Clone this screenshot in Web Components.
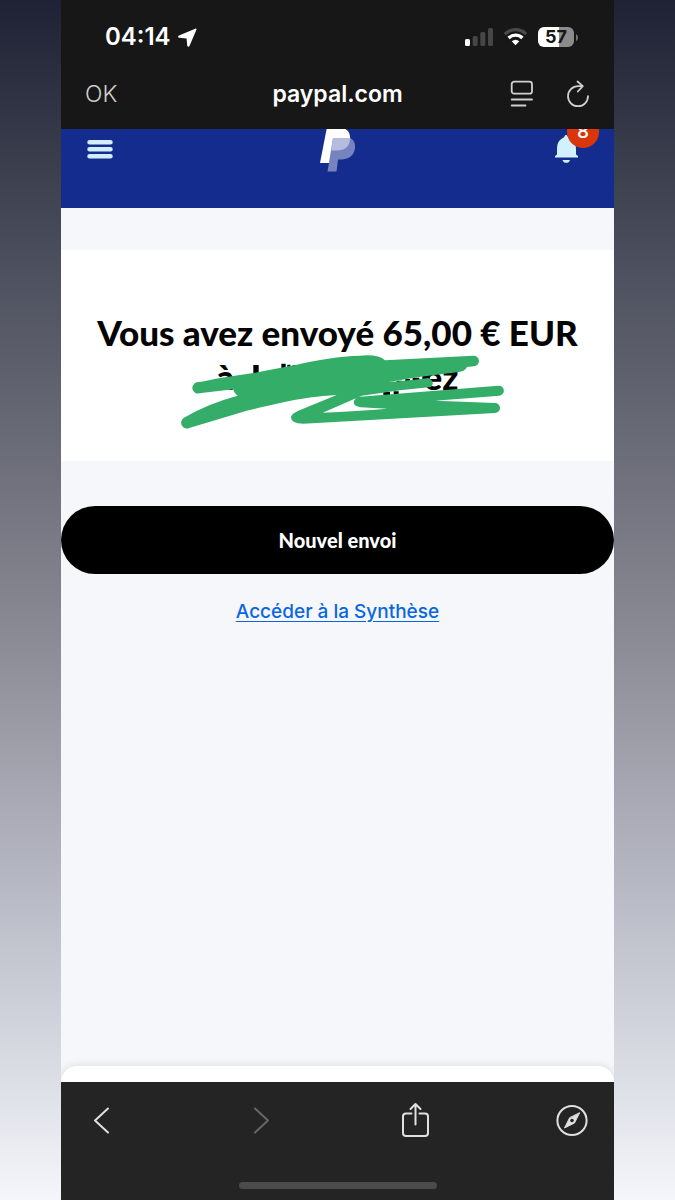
<!DOCTYPE html>
<html lang="fr">
<head>
<meta charset="utf-8">
<meta name="viewport" content="width=device-width, initial-scale=1">
<title>paypal.com</title>
<style>
html, body { margin: 0; min-height: 100%; }
body { font-family: Inter, "Liberation Sans", sans-serif; }
</style>
</head>
<body>
<phone-story>
  <status-bar></status-bar>
  <address-bar>paypal.com</address-bar>
  <site-header></site-header>
  <sent-card></sent-card>
  <page-actions></page-actions>
  <bottom-bar></bottom-bar>
</phone-story>
<script>
const define = (name, markup) => customElements.define(name, class extends HTMLElement {
  constructor() {
    super();
    this.attachShadow({ mode: 'open' }).innerHTML = markup;
  }
});

define('phone-story', `
<style>
:host { display: flex; box-sizing: border-box; min-height: 100vh; padding: 0 61px;
  background: linear-gradient(#1f2234 0%, #525562 25%, #83848e 50%, #b9bbc6 75%, #f4f6fb 100%); }
main { flex: 1; min-width: 0; display: flex; flex-direction: column; background: #f5f7fb; }
</style>
<main><slot></slot></main>`);

define('status-bar', `
<style>
:host { display: flex; align-items: center; justify-content: space-between; height: 74px;
  padding: 0 36px 0 44px; background: #171717; color: #fff; }
div { display: flex; align-items: center; gap: 7px; }
.signals { gap: 11px; }
time { font-size: 24px; font-weight: 600; line-height: 28px; }
svg { display: block; }
.battery { position: relative; gap: 2px; }
.level { justify-content: center; width: 36px; height: 20px; border-radius: 6px; color: #171717;
  font-size: 18px; font-weight: 700; line-height: 20px;
  background: linear-gradient(90deg, #fff 57%, #8c8c8c 57%); }
</style>
<div>
  <time>04:14</time>
  <svg width="19" height="19" viewBox="0 0 19 19"><path d="M18.400 1.800C18.800.8 18.200.3 17.200.7L1 7.500C-.3 8.200-.2 9.600 1.200 9.800L8.600 10.400L9.200 17.600C9.400 19 11 19.100 11.600 17.800Z" fill="#fff"/></svg>
</div>
<div class="signals">
  <svg width="28" height="18" viewBox="0 0 28 18"><rect y="11" width="5" height="7" rx="1.500" fill="#fff"/><g fill="#464646"><rect x="7.700" y="8" width="5" height="10" rx="1.500"/><rect x="15.300" y="4" width="5" height="14" rx="1.500"/><rect x="23" width="5" height="18" rx="1.500"/></g></svg>
  <svg width="23" height="18" viewBox="0 0 23 18" fill="none" stroke-width="3.200"><path d="M.9 6.100Q5.300 1.700 11.500 1.700T22.100 6.100" stroke="#4a4a4a"/><path d="M4.600 10Q7.500 7.200 11.500 7.200T18.400 10" stroke="#fff"/><path d="M7.700 13.300Q11.500 10 15.300 13.300L11.500 17.200Z" fill="#fff"/></svg>
  <div class="battery"><div class="level">57</div><svg width="2" height="7" viewBox="0 0 2 7"><path d="M0 0Q2 1 2 3.500T0 7Z" fill="#777"/></svg></div>
</div>`);

define('address-bar', `
<style>
:host { display: grid; grid-template-columns: 1fr auto 1fr; align-items: center; height: 40px;
  padding: 0 24px 15px; background: #171717; color: #fff; font-size: 23px; line-height: 32px; font-weight: 600; }
button { border: 0; padding: 0; background: none; color: #cfcfcf; font: inherit; font-weight: 300; text-align: left; justify-self: start; }
div { display: flex; justify-content: flex-end; gap: 32px; }
svg { display: block; }
</style>
<button>OK</button>
<span><slot></slot></span>
<div>
  <button aria-label="Lecteur"><svg width="24" height="28" viewBox="0 0 24 28" fill="none" stroke="#d0d0d0" stroke-width="1.800" stroke-linecap="round"><rect x="1.700" y="1.700" width="20.300" height="12" rx="2.500"/><path d="M1.700 19.500H22M1.700 25.500H15.500"/></svg></button>
  <button aria-label="Actualiser"><svg width="24" height="28" viewBox="0 0 24 28" fill="none" stroke="#d0d0d0" stroke-width="1.800" stroke-linecap="round" stroke-linejoin="round"><path d="M22 16.200A10 10 0 1 1 12 6.200H16.500M11.500 1.500L16.800 6.200L11.800 11.500"/></svg></button>
</div>`);

define('site-header', `
<style>
:host { display: grid; grid-template-columns: 1fr auto 1fr; height: 79px; padding: 0 15px; overflow: hidden; background: #142c8e; }
button { position: relative; border: 0; padding: 0; background: none; justify-self: start; align-self: start; font: inherit; }
button:first-of-type { padding-left: 10px; }
button:last-child { justify-self: end; }
svg { display: block; }
b { position: absolute; right: 0; top: -13px; width: 32px; height: 32px; border-radius: 50%;
  background: #d9360b; color: #fff; font-size: 19px; line-height: 32px; font-weight: 500; text-align: center; }
</style>
<button aria-label="Menu"><svg width="28" height="40" viewBox="0 0 28 40" stroke="#d2eefe" stroke-width="4.500" stroke-linecap="round"><path d="M3.500 13.200H24.500M3.500 20.200H24.500M3.500 27.300H24.500"/></svg></button>
<svg width="36" height="44" viewBox="0 0 36 44" role="img" aria-label="PayPal"><path d="M7-2H17C26-2 31 3 30 10.500C29 19 23 23 15.500 23H13L11 34H0Z" fill="#fff"/><path d="M13 9H30C34 11 35.500 14.500 35 19C34 27 28 30.500 21 30.500H18L16.500 42.500H7.500Z" fill="#7783c0"/><path d="M13 9H30.200C30 18 24 21.500 17 21.500H11.300Z" fill="#b5bcde"/></svg>
<button aria-label="Notifications"><svg width="44" height="40" viewBox="1 0 44 40" fill="#d2f1fe"><path d="M12 6C13.500 6 13.500 8 15 9C20 11 22 15 22 20V25.500L24 27V28.500H1V27L3 25.500V20C3 14 5 11 9 9C11 8 10.500 6 12 6ZM8.500 31H16C15 34.800 9.500 34.800 8.500 31Z"/></svg><b>8</b></button>`);

define('sent-card', `
<style>
:host { display: block; position: relative; margin-top: 42px; padding: 60px 20px 63px; background: #fff; text-align: center; }
h1 { margin: 0; font: 900 35px/44px Lato, "Open Sans", sans-serif; color: #040404; }
.recipient { display: flex; justify-content: space-between; width: 242px; margin: 0 auto; }
svg { position: absolute; left: calc(50% - 168px); top: 50px; }
</style>
<h1>Vous avez envoyé 65,00 € EUR <span class="recipient"><span>à</span><span>ez</span></span></h1>
<svg width="350" height="170" viewBox="0 0 1050 510" aria-hidden="true">
  <path d="M250 195h16v40h-16zM334 191h13v30h-13zM352 194h9v20h-9zM368 196h8v15h-8zM680 242h16v8h-16zM706 237h14v8h-14zM728 233h20v9h-20zM757 228h18v10h-18zM640 276h20v9h-20zM671 274h15v9h-15z" fill="#040404"/>
  <path d="M80 247C105 244 130 238 150 234L255 218L380 194C440 180 510 168 570 167Q625 162 645 181L910 167A16 16 0 0 1 912 199L891 201Q885 215 860 217Q760 228 655 246Q720 242 775 234Q797 245 783 261L690 271L575 287L458 338Q560 334 652 326L572 322Q550 319 551 306Q554 292 570 290L985 257A15 15 0 0 1 988 287L795 302L975 309A15 15 0 0 1 975 339L400 371Q361 371 363 350Q366 340 385 332L500 285Q420 289 340 307Q250 327 220 335L60 383A17 17 0 0 1 42 353Q110 312 203 287Q192 280 190 268L145 273L88 280A16 16 0 0 1 80 247Z" fill="#33ad67"/>
</svg>`);

define('page-actions', `
<style>
:host { display: flex; flex: 1; flex-direction: column; align-items: center; padding-top: 45px; overflow: hidden; }
button { width: 100%; height: 68px; border: 0; border-radius: 34px; background: #000; color: #fff; font: 900 20px/28px Lato, sans-serif; }
a { margin-top: 24px; color: #0a66e0; font-size: 19px; font-weight: 500; line-height: 28px; text-underline-offset: 3px; }
.sheet { align-self: stretch; height: 16px; margin-top: auto; border-radius: 16px 16px 0 0; background: #fff; box-shadow: 0 0 10px #0000001f; }
</style>
<button>Nouvel envoi</button>
<a href="#synthese">Accéder à la Synthèse</a>
<div class="sheet"></div>`);

define('bottom-bar', `
<style>
:host { display: block; height: 118px; background: #242424; }
nav { display: flex; justify-content: space-between; padding: 18px 26px 0 24px; }
button { border: 0; padding: 0; background: none; }
svg { display: block; fill: none; stroke: #e0e0e0; stroke-width: 2; stroke-linecap: round; stroke-linejoin: round; }
button:disabled svg { stroke: #676767; }
.home { width: 198px; height: 7px; margin: 40px auto 0; border-radius: 4px; background: #4b4b4b; }
</style>
<nav>
  <button aria-label="Précédent"><svg width="32" height="42" viewBox="0 0 32 42"><path d="M23 8.500L10 20.500L23 32.500"/></svg></button>
  <button aria-label="Suivant" disabled><svg width="32" height="42" viewBox="0 0 32 42"><path d="M13 8.500L26 20.500L13 32.500"/></svg></button>
  <button aria-label="Partager"><svg width="32" height="42" viewBox="0 0 32 42"><path d="M12.500 13.500H7Q4 13.500 4 16.500V33Q4 36 7 36H26Q29 36 29 33V16.500Q29 13.500 26 13.500H20.500M16.500 24.500V4M11.500 9L16.500 4L21.500 9"/></svg></button>
  <button aria-label="Ouvrir dans Safari"><svg width="32" height="42" viewBox="0 0 32 42"><circle cx="16" cy="20.500" r="14.600"/><path d="M23.500 13L18.500 23L8.500 28L13.500 18Z" fill="#e0e0e0" stroke-width="1"/><circle cx="16" cy="20.500" r="1.800" fill="#242424" stroke="none"/></svg></button>
</nav>
<div class="home"></div>`);
</script>
</body>
</html>
